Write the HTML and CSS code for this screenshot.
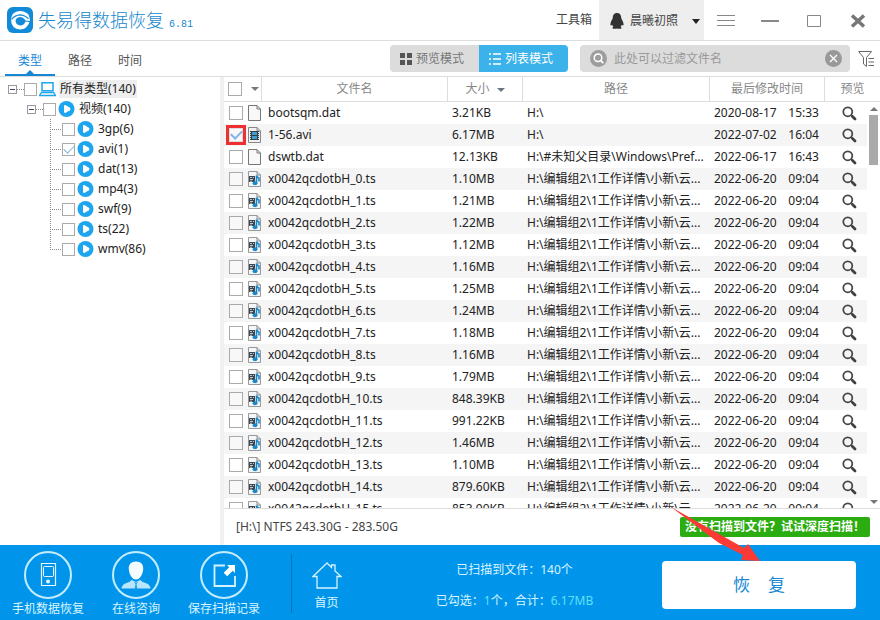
FILE: index.html
```html
<!DOCTYPE html>
<html lang="zh-CN">
<head>
    <meta charset="UTF-8">
    <meta name="viewport" content="width=device-width, initial-scale=1.0">
    <title>失易得数据恢复</title>
    <link rel="stylesheet" href="styles.css">
</head>
<body>
    <!-- 图标 -->
    <svg class="sprite" aria-hidden="true">
        <symbol id="icon-play" viewBox="0 0 16 16">
            <circle cx="8" cy="8" r="8" fill="#1ea5f0"/>
            <path d="M5.5 5.400q0-2 1.800-1.200l4 2.600q1.500 1.200 0 2.400l-4 2.600q-1.800.800-1.800-1.200z" fill="#fff"/>
        </symbol>
        <symbol id="icon-file" viewBox="0 0 13 16">
            <path d="M.5.5h8.500l3.500 3.500v11.500h-12z" fill="#f8f8f8" stroke="#777"/>
            <path d="M9 .5v3.500h3.500" fill="none" stroke="#777"/>
        </symbol>
        <symbol id="icon-avi" viewBox="0 0 13 16">
            <path d="M.5.5h8.500l3.500 3.500v11.500h-12z" fill="#f0f0f0" stroke="#888"/>
            <path d="M9 .5v3.500h3.500" fill="none" stroke="#888"/>
            <path d="M2 4h9v9h-9z" fill="#333f48"/>
            <path d="M4 5h5v3h-5zM4 9h5v3h-5z" fill="#3f9ccc"/>
            <path d="M2.500 5v8M10.500 5v8" stroke="#ddd" stroke-dasharray="1 1"/>
        </symbol>
        <symbol id="icon-ts" viewBox="0 0 13 16">
            <path d="M.5.5h8.500l3.500 3.500v11.500h-12z" fill="#f3f7fa" stroke="#999"/>
            <path d="M9 .5v3.500h3.500" fill="none" stroke="#888"/>
            <path d="M1 5h6v6h-6z" fill="#3b4650"/>
            <path d="M2 6.500h2M5 6.500h1M2 8.500h3M2 10.200h2" stroke="#dde7ee" stroke-width=".8"/>
            <path d="M8.500 12.500v-8q.5 2 2.500 2.500v3.500" fill="none" stroke="#1c86c6" stroke-width="1.600"/>
            <ellipse cx="7" cy="12.300" rx="2.400" ry="2" fill="#1c86c6"/>
        </symbol>
        <symbol id="icon-zoom" viewBox="0 0 15 15">
            <circle cx="5.800" cy="5.800" r="4.500" fill="none" stroke="#484848" stroke-width="1.800"/>
            <path d="M9 9l1.500 1.500" stroke="#484848" stroke-width="1.500"/>
            <path d="M10.500 10.500l2.500 2.500" stroke="#404040" stroke-width="2.800" stroke-linecap="round"/>
        </symbol>
    </svg>

    <!-- 标题栏 -->
    <header class="titlebar">
        <svg class="logo" viewBox="0 0 26 26" aria-hidden="true">
            <rect width="26" height="26" rx="6" fill="#118bd8"/>
            <path d="M21.500 7.500Q18 4 13 4 4 4.500 4 13q.5 9 9 9.500 7 0 9.500-7.500l-4-.5q-1.500 4-5 4-4.500-.3-5-4.500.3-3.500 4.500-4 3.500 0 5.500 3.500l4.500.5q-.2-3.500-1.500-6.500z" fill="#fff"/>
            <path d="M4.500 12.500q3.500-4.500 8.500-4.700 5 .2 8.500 4" fill="none" stroke="#118bd8" stroke-width="1.200"/>
        </svg>
        <h1>失易得数据恢复</h1>
        <span class="version">6.81</span>
        <a href="#" class="toolbox">工具箱</a>
        <button type="button" class="user">
            <svg width="14" height="16" viewBox="0 0 14 16" aria-hidden="true">
                <path d="M7 0C4 0 2.800 2.200 2.800 4.800 2.800 6.500.3 8.500.4 11.500c0 1.500.8 1.200 1.800.3.200 1 .7 1.500 1.200 2-2.200 1.700-.3 2.200 1.800 2 1-.1 1.500-.4 1.800-.4s.8.3 1.800.4c2.100.2 4-.3 1.800-2 .5-.5 1-1 1.200-2 1 .9 1.800 1.200 1.800-.3.1-3-2.400-5-2.400-6.700C11.200 2.200 10 0 7 0z" fill="#333"/>
            </svg>
            <span>晨曦初照</span>
            <i class="caret dark"></i>
        </button>
        <div class="window-buttons">
            <button type="button" aria-label="菜单"><svg width="18" height="12" viewBox="0 0 18 12"><path d="M0 .5h18M0 5.500h18M0 10.500h18" stroke="#888"/></svg></button>
            <button type="button" aria-label="最小化"><svg width="18" height="12" viewBox="0 0 18 12"><path d="M0 6h18" stroke="#888" stroke-width="2"/></svg></button>
            <button type="button" aria-label="最大化"><svg width="14" height="12" viewBox="0 0 14 12"><path d="M.5.5h13v11h-13z" fill="none" stroke="#888"/></svg></button>
            <button type="button" aria-label="关闭"><svg width="16" height="14" viewBox="0 0 16 14"><path d="M2 1.500l12 11M14 1.500l-12 11" stroke="#777" stroke-width="3.500"/></svg></button>
        </div>
    </header>

    <!-- 工具栏 -->
    <nav class="toolbar">
        <div class="tabs">
            <button type="button" class="tab active">类型</button>
            <button type="button" class="tab">路径</button>
            <button type="button" class="tab">时间</button>
        </div>
        <div class="modes">
            <button type="button" class="mode preview">
                <svg width="12" height="12" viewBox="0 0 12 12" aria-hidden="true"><path d="M0 0h5v5H0zM7 0h5v5H7zM0 7h5v5H0zM7 7h5v5H7z" fill="#555"/></svg>
                预览模式
            </button>
            <button type="button" class="mode list">
                <svg width="12" height="12" viewBox="0 0 12 12" aria-hidden="true"><path d="M0 1h2M4 1h8M0 6h2M4 6h8M0 11h2M4 11h8" stroke="#fff" stroke-width="1.500"/></svg>
                列表模式
            </button>
        </div>
        <div class="search">
            <svg width="17" height="17" viewBox="0 0 17 17" aria-hidden="true"><circle cx="8.500" cy="8.500" r="8.500" fill="#9d9d9d"/><circle cx="8" cy="7.800" r="3.800" fill="none" stroke="#fff" stroke-width="1.500"/><path d="M10.800 10.600l2.500 2.600" stroke="#fff" stroke-width="1.700"/></svg>
            <input type="text" id="filter" aria-label="过滤文件名" placeholder="此处可以过滤文件名">
            <button type="button" aria-label="清除">
                <svg width="17" height="17" viewBox="0 0 17 17"><circle cx="8.500" cy="8.500" r="8.500" fill="#999"/><path d="M5 5l7 7M12 5l-7 7" stroke="#fff" stroke-width="1.300"/></svg>
            </button>
        </div>
        <button type="button" class="filter" aria-label="筛选">
            <svg width="17" height="16" viewBox="0 0 17 16"><path d="M.7.500h12.800L8.500 6.500v9L5.500 13V6.500z" fill="none" stroke="#666"/><path d="M10.500 7.500H16M10.500 11H16M10.500 14.500H16" stroke="#666"/></svg>
        </button>
    </nav>

    <main class="content">
        <!-- 类型树 -->
        <aside class="tree">
            <ul>
                <li>
                    <div class="node">
                        <button type="button" class="toggle" aria-label="折叠"></button><i class="dots"></i>
                        <input type="checkbox" id="t-all">
                        <svg width="17" height="16" viewBox="0 0 17 16" aria-hidden="true"><path d="M3 1.800h11v8H3z" fill="none" stroke="#1ea5f0" stroke-width="1.500"/><path d="M2.500 11.500h12l2 3H.5z" fill="none" stroke="#1ea5f0" stroke-width="1.300"/></svg>
                        <label for="t-all" class="selected">所有类型(140)</label>
                    </div>
                    <ul>
                        <li>
                            <div class="node">
                                <button type="button" class="toggle" aria-label="折叠"></button><i class="dots"></i>
                                <input type="checkbox" id="t-video">
                                <svg width="17" height="16"><use href="#icon-play"/></svg>
                                <label for="t-video">视频(140)</label>
                            </div>
                            <ul id="type-list"></ul>
                        </li>
                    </ul>
                </li>
            </ul>
        </aside>

        <!-- 文件列表 -->
        <section class="files">
            <div class="file-list">
                <table>
                    <colgroup>
                        <col class="col-check"><col class="col-name"><col class="col-size"><col><col class="col-date"><col class="col-view">
                    </colgroup>
                    <thead>
                        <tr>
                            <th><div class="cell"><input type="checkbox" aria-label="全选"><i class="caret"></i></div></th>
                            <th>文件名</th>
                            <th>大小<i class="caret sort"></i></th>
                            <th>路径</th>
                            <th>最后修改时间</th>
                            <th>预览</th>
                        </tr>
                    </thead>
                    <tbody id="file-rows"></tbody>
                </table>
                <div class="scrollbar"><i class="caret up"></i><i class="thumb"></i><i class="caret"></i></div>
            </div>
            <div class="status">
                <span>[H:\] NTFS 243.30G - 283.50G</span>
                <a href="#" class="deep-scan">没有扫描到文件？试试深度扫描！</a>
            </div>
        </section>
    </main>

    <!-- 底部操作栏 -->
    <footer class="footer">
        <button type="button" class="action">
            <svg width="48" height="48" viewBox="0 0 48 48" aria-hidden="true"><circle cx="24" cy="24" r="23" fill="none" stroke="#c4edff" stroke-width="2"/><path d="M17.500 12.500h14v22h-14z" fill="none" stroke="#e8f9ff" stroke-width="1.200"/><rect x="19.500" y="15.500" width="10" height="10" rx="1" fill="none" stroke="#e8f9ff"/><circle cx="24" cy="30.500" r="2" fill="#e8f9ff"/></svg>
            <span>手机数据恢复</span>
        </button>
        <button type="button" class="action">
            <svg width="48" height="48" viewBox="0 0 48 48" aria-hidden="true"><circle cx="24" cy="24" r="23" fill="none" stroke="#c4edff" stroke-width="2"/><path d="M24 10.500c-5 0-7.500 3-7.200 7.500.3 5.500 3.500 10.500 7.200 10.500s6.900-5 7.200-10.500c.3-4.500-2.200-7.500-7.200-7.500z" fill="#f4fcff"/><path d="M9.500 37.500q.5-4.500 5-5.500 4-1 5-3l4.500 2 4.500-2q1 2 5 3 4.500 1 5 5.500z" fill="#b9e6fb"/><path d="M22.500 31.500L24 33l1.500-1.500M24 33l-1 4.500h2z" fill="#0095eb" stroke="#0095eb" stroke-width=".5"/></svg>
            <span>在线咨询</span>
        </button>
        <button type="button" class="action">
            <svg width="48" height="48" viewBox="0 0 48 48" aria-hidden="true"><circle cx="24" cy="24" r="23" fill="none" stroke="#c4edff" stroke-width="2"/><path d="M25 14.500H14.500v20.500h20.500V25" fill="none" stroke="#d5f3ff" stroke-width="1.800"/><path d="M27 14h8v8l-2.300-2.300-5.500 5.500-3.500-3.500 5.500-5.500z" fill="#fff"/></svg>
            <span>保存扫描记录</span>
        </button>
        <a href="#" class="home">
            <svg width="30" height="27" viewBox="0 0 30 27" aria-hidden="true"><path d="M15 1L1 14.500h4V26h20V14.500h4L23 9V3h-3.500v2.500z" fill="none" stroke="#d5f3ff" stroke-width="1.300"/></svg>
            <span>首页</span>
        </a>
        <div class="summary">
            <p>已扫描到文件：140个</p>
            <p>已勾选：<b>1</b>个，合计：<b>6.17MB</b></p>
        </div>
        <div class="recover-box">
            <button type="button" class="recover"><span>恢</span><span>复</span></button>
            <svg class="pointer" width="90" height="54" viewBox="0 0 90 54" aria-hidden="true"><path d="M1 0l73 41 4-4 12 17-19-1 2-5-24-12z" fill="#fb3a35"/></svg>
        </div>
    </footer>

    <script>
        const types = [['3gp', 6], ['avi', 1], ['dat', 13], ['mp4', 3], ['swf', 9], ['ts', 22], ['wmv', 86]];

        const files = [
            { name: 'bootsqm.dat', size: '3.21KB', path: 'H:\\', day: '2020-08-17', time: '15:33', icon: 'file' },
            { name: '1-56.avi', size: '6.17MB', path: 'H:\\', day: '2022-07-02', time: '16:04', icon: 'avi', checked: true },
            { name: 'dswtb.dat', size: '12.13KB', path: 'H:\\#未知父目录\\Windows\\Pref...', day: '2022-06-17', time: '16:43', icon: 'file' }
        ];
        const sizes = ['1.10MB', '1.21MB', '1.22MB', '1.12MB', '1.16MB', '1.25MB', '1.24MB', '1.18MB', '1.16MB', '1.79MB',
            '848.39KB', '991.22KB', '1.46MB', '1.10MB', '879.60KB', '853.90KB'];
        sizes.forEach((size, i) => {
            files.push({ name: `x0042qcdotbH_${i}.ts`, size, path: 'H:\\编辑组2\\1工作详情\\小新\\云...', day: '2022-06-20', time: '09:04', icon: 'ts' });
        });

        document.getElementById('type-list').innerHTML = types.map(([name, count]) => `
            <li class="node leaf">
                <i class="branch"></i>
                <input type="checkbox" id="t-${name}" ${name === 'avi' ? 'checked' : ''}>
                <svg width="17" height="16"><use href="#icon-play"/></svg>
                <label for="t-${name}">${name}(${count})</label>
            </li>
        `).join('');

        document.getElementById('file-rows').innerHTML = files.map(file => `
            <tr>
                <td><div class="cell">
                    <input type="checkbox" aria-label="${file.name}" class="${file.checked ? 'marked' : ''}" ${file.checked ? 'checked' : ''}>
                    <svg width="13" height="16"><use href="#icon-${file.icon}"/></svg>
                </div></td>
                <td class="name">${file.name}</td>
                <td>${file.size}</td>
                <td>${file.path}</td>
                <td><div class="date"><span>${file.day}</span><span>${file.time}</span></div></td>
                <td><button type="button" class="view" aria-label="预览"><svg width="15" height="15"><use href="#icon-zoom"/></svg></button></td>
            </tr>
        `).join('');
    </script>
</body>
</html>
```

FILE: styles.css
```css
* {
    box-sizing: border-box;
}
body {
    display: flex;
    flex-direction: column;
    height: 100vh;
    margin: 0;
    overflow: hidden;
    background-color: #fff;
    color: #222;
    font-family: "Noto Sans", "Noto Sans CJK SC", sans-serif;
    font-size: 12px;
    line-height: 20px;
}
button {
    padding: 0;
    border: none;
    background: none;
    color: inherit;
    font: inherit;
    cursor: pointer;
}
a {
    color: inherit;
    text-decoration: none;
}
svg {
    display: block;
    flex: none;
}
ul {
    margin: 0;
    padding: 0;
    list-style: none;
}
input[type="checkbox"] {
    appearance: none;
    flex: none;
    width: 14px;
    height: 14px;
    margin: 0;
    border: 1px solid #aaa;
    background-color: #fff;
}
input[type="checkbox"]:checked {
    display: grid;
    place-items: center;
}
input[type="checkbox"]:checked::before {
    content: "";
    width: 9px;
    height: 5px;
    margin-bottom: 3px;
    border: solid #85b5dc;
    border-width: 0 0 1px 1px;
    transform: rotate(-45deg);
}
input[type="checkbox"].marked {
    border-color: #ddd;
    box-shadow: 0 0 0 3px #ef3030;
}
input[type="checkbox"].marked::before {
    border-color: #7db4ea;
    border-width: 0 0 2px 2px;
}
.sprite {
    position: absolute;
    width: 0;
    height: 0;
}
.caret {
    flex: none;
    width: 0;
    height: 0;
    border: 4px solid transparent;
    border-top-color: #777;
    border-bottom: none;
}
.caret.dark {
    border-top: 5px solid #222;
}
.caret.up {
    border-top: none;
    border-bottom: 4px solid #777;
}
.caret.sort {
    display: inline-block;
    margin-left: 7px;
    vertical-align: middle;
    border-top-color: #678;
}

/* 标题栏 */
.titlebar {
    display: flex;
    flex: none;
    align-items: center;
    height: 41px;
    padding-left: 7px;
    border-bottom: 1px solid #ddd;
}
.logo {
    width: 26px;
    height: 26px;
}
.titlebar h1 {
    margin: 0 5px;
    color: #2088cc;
    font-size: 18px;
    font-weight: 300;
}
.version {
    margin-top: 10px;
    color: #2088cc;
    font-family: "Liberation Mono", monospace;
    font-size: 10px;
}
.toolbox {
    margin-left: auto;
    margin-right: 7px;
    color: #444;
}
.user {
    display: flex;
    align-items: center;
    gap: 6px;
    height: 40px;
    padding: 2px 4px 0 11px;
    background-color: #eee;
    color: #444;
}
.user .caret {
    margin-left: 8px;
}
.window-buttons {
    display: flex;
    width: 176px;
    padding: 2px 0 0;
}
.window-buttons button {
    display: flex;
    flex: 1;
    align-items: center;
    justify-content: center;
}

/* 工具栏 */
.toolbar {
    display: flex;
    flex: none;
    align-items: center;
    height: 36px;
    padding: 0 5px;
    border-bottom: 1px solid #ddd;
}
.tabs {
    display: flex;
    align-self: stretch;
}
.tab {
    position: relative;
    width: 50px;
    padding-top: 4px;
    color: #555;
}
.tab.active {
    padding-top: 6px;
    border-bottom: 2px solid #1787d4;
    color: #1787d4;
}
.tab.active::after {
    content: "";
    position: absolute;
    bottom: 0;
    left: 21px;
    border: 4px solid transparent;
    border-top: none;
    border-bottom-color: #1787d4;
}
.modes {
    display: flex;
    margin-left: auto;
    border-radius: 4px;
    overflow: hidden;
}
.mode {
    display: flex;
    align-items: center;
    justify-content: center;
    gap: 4px;
    width: 89px;
    height: 27px;
    padding-right: 5px;
    background-color: #dcdcdc;
    color: #777;
}
.mode.list {
    background-color: #3bb2ea;
    color: #fff;
}
.search {
    display: flex;
    align-items: center;
    gap: 7px;
    width: 270px;
    height: 27px;
    margin: 0 8px 0 12px;
    padding: 0 8px 0 10px;
    border-radius: 4px;
    background-color: #dcdcdc;
}
.search input {
    flex: 1;
    min-width: 0;
    padding: 0;
    border: none;
    outline: none;
    background: none;
    font: inherit;
}
.search input::placeholder {
    color: #999;
}

/* 类型树 */
.content {
    display: flex;
    flex: 1;
    min-height: 0;
}
.tree {
    flex: none;
    width: 220px;
    padding: 2px 0 0 8px;
}
.tree ul ul {
    padding-left: 19px;
}
.node {
    display: flex;
    align-items: center;
    height: 20px;
}
.node input[type="checkbox"] {
    width: 13px;
    height: 13px;
}
.node svg {
    margin: 0 3px 0 2px;
}
.node label {
    padding: 0 1px;
    line-height: 18px;
}
.node label.selected {
    background-color: #eee;
}
.toggle {
    width: 9px;
    height: 9px;
    border: 1px solid #999;
    background: linear-gradient(#447, #447) center / 5px 1px no-repeat;
}
.dots {
    width: 7px;
    border-top: 1px dotted #888;
}
.branch {
    align-self: stretch;
    width: 12px;
    margin-left: 4px;
    background:
        repeating-linear-gradient(#888 0 1px, transparent 1px 2px) 0 0 / 1px 100% no-repeat,
        repeating-linear-gradient(90deg, #888 0 1px, transparent 1px 2px) 0 10px / 100% 1px no-repeat;
}
.leaf:last-child .branch {
    background-size: 1px 10px, 100% 1px;
}

/* 文件列表 */
.files {
    display: flex;
    flex: 1;
    flex-direction: column;
    min-width: 0;
    border-left: 4px solid #f0f0f0;
}
.file-list {
    position: relative;
    flex: 1;
    min-height: 0;
    overflow: hidden;
    border-bottom: 1px solid #ddd;
}
table {
    width: 100%;
    table-layout: fixed;
    border-collapse: separate;
    border-spacing: 0;
}
.col-check {
    width: 38px;
}
.col-name {
    width: 186px;
}
.col-size {
    width: 75px;
}
.col-date {
    width: 115px;
}
.col-view {
    width: 55px;
}
th {
    height: 25px;
    padding: 0;
    border-right: 1px solid #ddd;
    border-bottom: 1px solid #ddd;
    color: #888;
    font-weight: normal;
}
th:last-child {
    border-right: none;
}
td {
    height: 22px;
    padding: 0 0 0 4px;
    overflow: hidden;
    white-space: nowrap;
}
td.name {
    padding-left: 6px;
}
td:first-child {
    padding: 0;
}
tbody tr:nth-child(even) {
    background-color: #f5f5f5;
}
tbody tr:nth-child(even) input {
    background-color: #f8f8f8;
}
.cell {
    display: flex;
    align-items: center;
    justify-content: space-between;
    padding: 0 1px 0 5px;
}
th .cell {
    padding: 0 2px 0 4px;
}
.date {
    display: flex;
    justify-content: space-between;
    padding-right: 6px;
}
.view {
    display: block;
    margin-left: 13px;
}
.scrollbar {
    position: absolute;
    top: 25px;
    right: 0;
    bottom: 0;
    display: flex;
    flex-direction: column;
    align-items: center;
    width: 13px;
    padding: 5px 0 4px;
    background-color: #fff;
}
.scrollbar .thumb {
    width: 9px;
    height: 50px;
    margin: 4px 0 auto;
    background-color: #aaa;
}
.status {
    display: flex;
    flex: none;
    align-items: center;
    justify-content: space-between;
    height: 36px;
    padding: 0 10px 0 12px;
    color: #444;
}
.deep-scan {
    padding: 0 5px;
    border-radius: 2px;
    background-color: #2bad12;
    color: #fff;
    font-weight: bold;
}

/* 底部操作栏 */
.footer {
    display: flex;
    flex: none;
    height: 75px;
    padding: 0 24px 0 4px;
    background-color: #0095eb;
    color: #d9f4ff;
}
.action,
.home {
    display: flex;
    flex: none;
    flex-direction: column;
    align-items: center;
    width: 88px;
    padding-top: 6px;
}
.home {
    width: 70px;
    margin: 9px 0 7px 23px;
    padding-top: 8px;
    border-left: 1px solid #0874b8;
}
.home span {
    margin-top: 4px;
}
.summary {
    display: flex;
    flex: 1;
    flex-direction: column;
    gap: 11px;
    padding: 15px 0 0 6px;
    text-align: center;
}
.summary p {
    margin: 0;
}
.summary b {
    color: #5fe0f5;
    font-weight: normal;
}
.recover-box {
    position: relative;
    align-self: center;
    width: 194px;
    margin-top: 4px;
}
.recover {
    display: flex;
    align-items: center;
    justify-content: center;
    gap: 18px;
    width: 100%;
    height: 48px;
    border-radius: 4px;
    background-color: #fff;
    color: #1787d4;
    font-size: 17px;
}
.pointer {
    position: absolute;
    right: 96px;
    bottom: 48px;
}
```
